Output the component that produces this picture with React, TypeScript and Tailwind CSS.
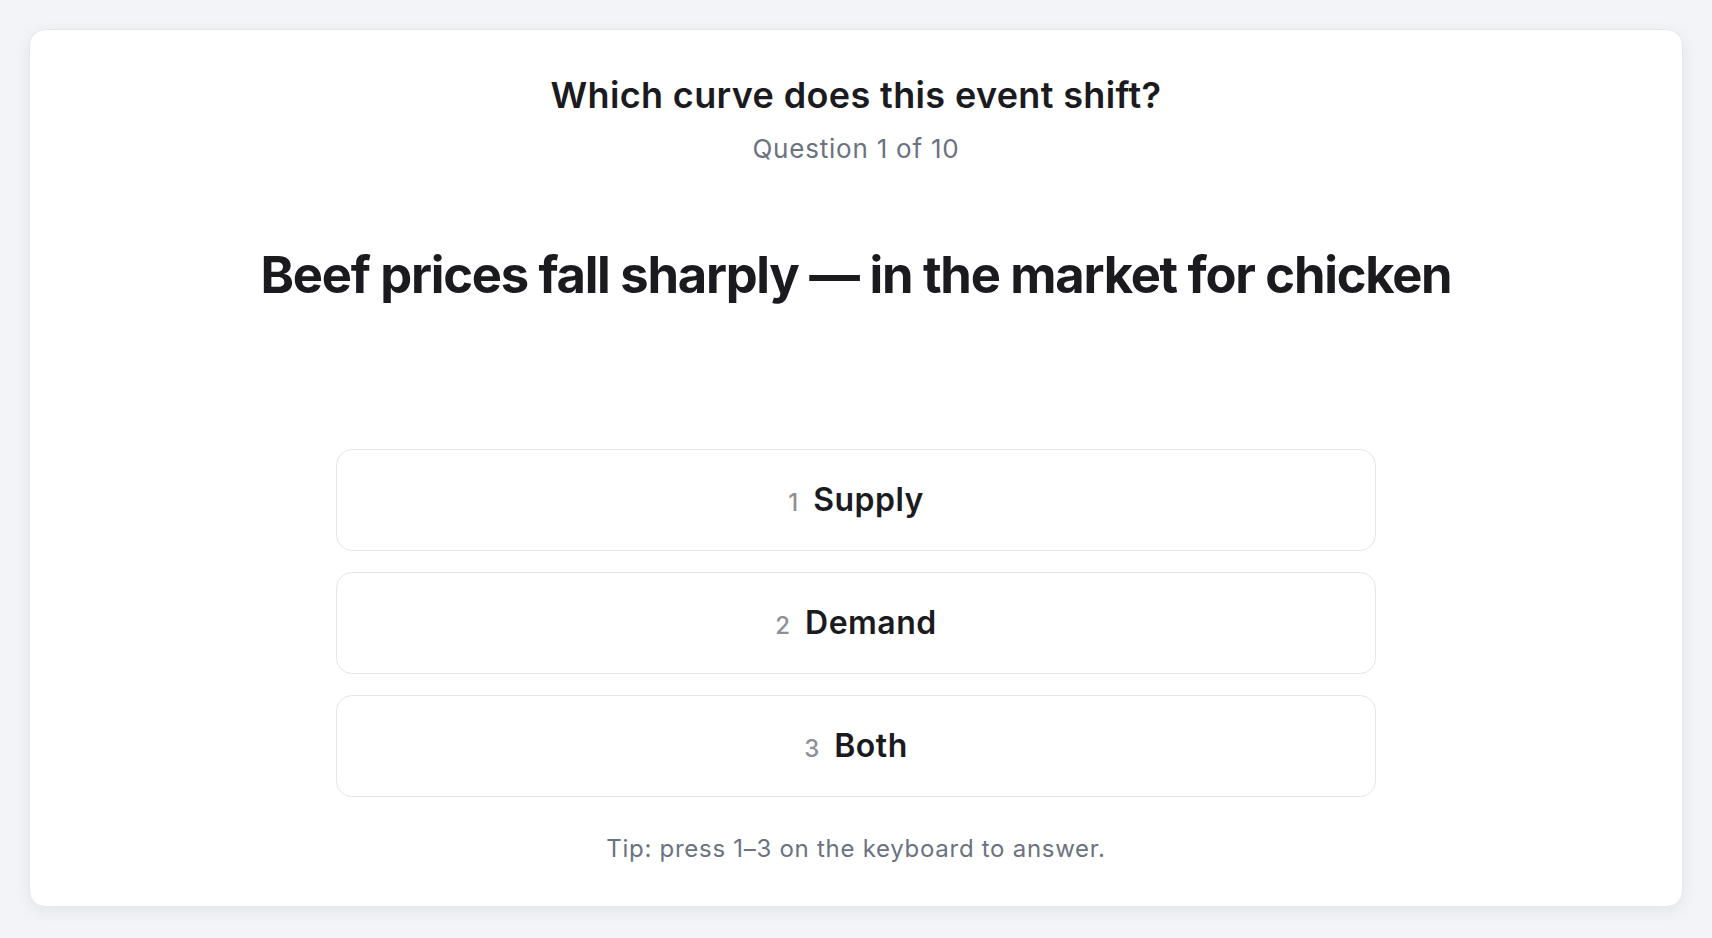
import React from "react";

const options = [
  { n: 1, label: "Supply" },
  { n: 2, label: "Demand" },
  { n: 3, label: "Both" },
];

export default function App() {
  return (
    <div
      className="min-h-screen w-full bg-[#f3f4f7] px-[29px] pt-[29px] pb-[31px]"
      style={{ fontFamily: "Inter, 'Noto Sans', sans-serif" }}
    >
      <div className="flex h-[878px] flex-col items-center rounded-2xl border border-[#e5e7eb] bg-white pt-[45px] shadow-[0_4px_16px_rgba(15,23,42,0.07)]">
        <h1 className="text-[36px] font-semibold leading-[40px] tracking-[0.01em] text-[#1b1b1f]">
          Which curve does this event shift?
        </h1>
        <div className="mt-[18px] text-[26px] leading-[32px] tracking-[0.03em] text-[#6b7280]">
          Question 1 of 10
        </div>
        <h2 className="mt-[80px] text-[50.7px] font-bold leading-[60px] tracking-tight text-[#1b1b1f]">
          Beef prices fall sharply — in the market for chicken
        </h2>
        <div className="mt-[144px] flex w-full max-w-[1040px] flex-col gap-[21px]">
          {options.map((o) => (
            <button
              key={o.n}
              className="flex h-[102px] w-full items-center justify-center rounded-2xl border border-[#e3e5ea] bg-white"
            >
              <span className="flex items-baseline gap-[15px]">
                <span className="text-[24px] font-medium text-[#8e9096]">{o.n}</span>
                <span className="text-[32px] font-semibold tracking-[0.015em] text-[#1b1b1f]">
                  {o.label}
                </span>
              </span>
            </button>
          ))}
        </div>
        <div className="mt-[36px] text-[24px] leading-[32px] tracking-[0.03em] text-[#6b7280]">
          Tip: press 1–3 on the keyboard to answer.
        </div>
      </div>
    </div>
  );
}
